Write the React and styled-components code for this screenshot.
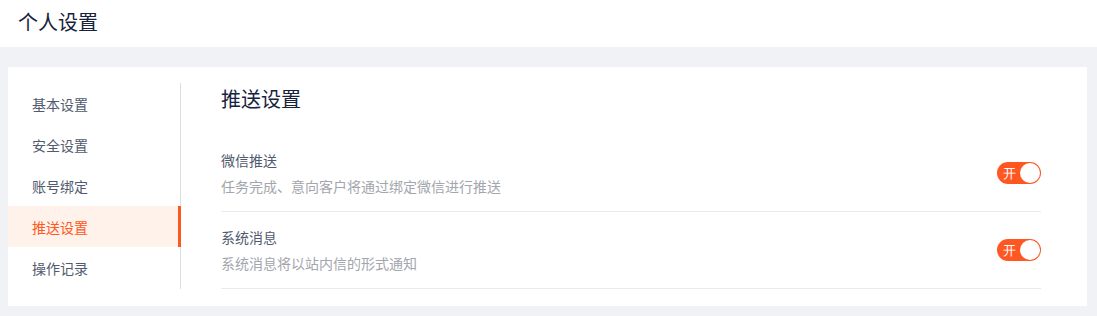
import React, { useState } from 'react';
import styled, { createGlobalStyle } from 'styled-components';

const GlobalStyle = createGlobalStyle`
  html, body {
    margin: 0;
    padding: 0;
    background: #f0f2f5;
    font-family: "Noto Sans CJK SC", "Noto Sans", sans-serif;
  }
  * { box-sizing: border-box; }
`;

const Page = styled.div`
  display: flex;
  flex-direction: column;
  min-height: 316px;
  background: #f0f2f5;
`;

const Header = styled.header`
  height: 47px;
  padding-left: 18px;
  display: flex;
  align-items: center;
  background: #fff;
  font-size: 20px;
  color: #17233d;
  padding-bottom: 5px;
`;

const Card = styled.section`
  margin: 20px 10px 11px 8px;
  padding: 16px 0 17px;
  background: #fff;
  display: flex;
`;

const Menu = styled.ul`
  list-style: none;
  margin: 0;
  padding: 0;
  width: 173px;
  flex-shrink: 0;
  border-right: 1px solid #dcdee2;
`;

const MenuItem = styled.li`
  position: relative;
  height: 41px;
  display: flex;
  align-items: center;
  padding-left: 24px;
  font-size: 14px;
  cursor: pointer;
  color: ${p => (p.$active ? '#ff5722' : '#515a6e')};
  background: ${p => (p.$active ? '#fff2ea' : 'transparent')};

  &::after {
    content: '';
    display: ${p => (p.$active ? 'block' : 'none')};
    position: absolute;
    top: 0;
    bottom: 0;
    right: -1px;
    width: 3px;
    background: #ff5722;
  }
`;

const Content = styled.div`
  flex: 1;
  padding: 2px 46px 0 40px;
`;

const Title = styled.h2`
  margin: 0 0 22px;
  font-size: 20px;
  line-height: 28px;
  font-weight: 400;
  color: #17233d;
`;

const Row = styled.div`
  display: flex;
  align-items: center;
  justify-content: space-between;
  padding: 14px 0;
  border-bottom: 1px solid #e8eaec;
`;

const RowText = styled.div`
  display: flex;
  flex-direction: column;
  gap: 4px;
`;

const Label = styled.span`
  font-size: 14px;
  line-height: 22px;
  color: #515a6e;
`;

const Desc = styled.span`
  font-size: 14px;
  line-height: 22px;
  color: #a3a6ad;
`;

const Switch = styled.button`
  width: 44px;
  height: 22px;
  border: none;
  border-radius: 11px;
  padding: 0 1px 0 6px;
  display: flex;
  align-items: center;
  justify-content: space-between;
  background: ${p => (p.$on ? '#ff5722' : '#ccc')};
  cursor: pointer;
  flex-direction: ${p => (p.$on ? 'row' : 'row-reverse')};
`;

const SwitchText = styled.span`
  font-size: 13px;
  color: #fff;
  line-height: 1;
`;

const Knob = styled.span`
  width: 20px;
  height: 20px;
  border-radius: 50%;
  background: #fff;
`;

const menu = ['基本设置', '安全设置', '账号绑定', '推送设置', '操作记录'];

const settings = [
  { key: 'wechat', label: '微信推送', desc: '任务完成、意向客户将通过绑定微信进行推送' },
  { key: 'system', label: '系统消息', desc: '系统消息将以站内信的形式通知' },
];

const App = () => {
  const [active, setActive] = useState('推送设置');
  const [state, setState] = useState({ wechat: true, system: true });

  return (
    <Page>
      <GlobalStyle />
      <Header>个人设置</Header>
      <Card>
        <Menu>
          {menu.map(m => (
            <MenuItem key={m} $active={m === active} onClick={() => setActive(m)}>
              {m}
            </MenuItem>
          ))}
        </Menu>
        <Content>
          <Title>推送设置</Title>
          {settings.map(s => (
            <Row key={s.key}>
              <RowText>
                <Label>{s.label}</Label>
                <Desc>{s.desc}</Desc>
              </RowText>
              <Switch
                $on={state[s.key]}
                onClick={() => setState({ ...state, [s.key]: !state[s.key] })}
              >
                <SwitchText>{state[s.key] ? '开' : '关'}</SwitchText>
                <Knob />
              </Switch>
            </Row>
          ))}
        </Content>
      </Card>
    </Page>
  );
};

export default App;
